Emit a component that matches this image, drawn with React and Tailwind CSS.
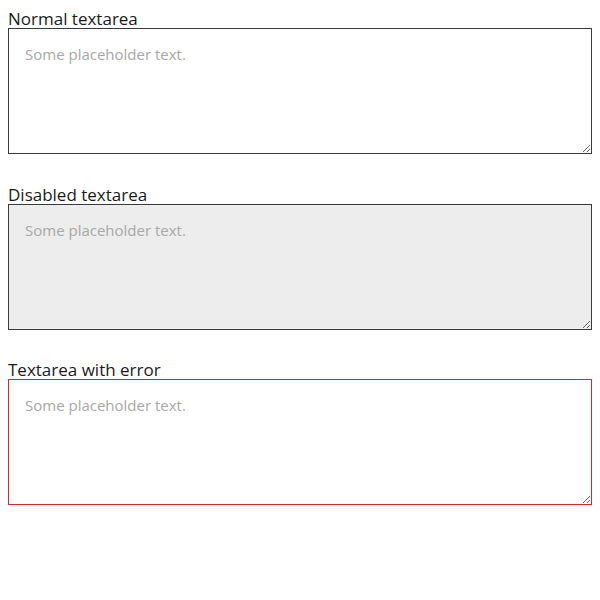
import React from 'react';

const Field = ({ label, disabled = false, error = false }) => {
  const border = error ? 'border-[#e3202e]' : 'border-[#3a3a3a]';
  const bg = disabled ? 'bg-[#ededed]' : 'bg-white';
  return (
    <div className="mb-[29.5px]">
      <label className="block text-[17px] leading-[20px] pt-[1px] -mb-[1px] text-[#1a1a1a]">{label}</label>
      <textarea
        disabled={disabled}
        placeholder="Some placeholder text."
        className={`block w-full h-[126px] border ${border} ${bg} px-4 py-[14px] text-[15px] leading-[22px] text-[#222] placeholder:text-[#a8a8a8] outline-none`}
      />
    </div>
  );
};

export default function App() {
  return (
    <div className="p-2 bg-white" style={{ fontFamily: '"Open Sans", "Noto Sans", sans-serif' }}>
      <Field label="Normal textarea" />
      <Field label="Disabled textarea" disabled />
      <Field label="Textarea with error" error />
    </div>
  );
}
